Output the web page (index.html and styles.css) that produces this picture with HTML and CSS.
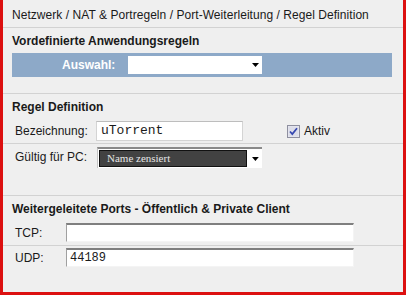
FILE: index.html
```html
<!DOCTYPE html>
<html lang="de">

<head>
    <meta charset="UTF-8">
    <title>Regel Definition</title>
    <link rel="stylesheet" href="styles.css">
</head>

<body>
    <div class="panel">
        <div class="crumb">Netzwerk / NAT &amp; Portregeln / Port-Weiterleitung / Regel Definition</div>

        <div class="section sec-preset">
            <div class="title">Vordefinierte Anwendungsregeln</div>
            <div class="bar">
                <span class="bar-label">Auswahl:</span>
                <div class="select-white">
                    <svg class="arrow" width="7" height="4" viewBox="0 0 7 4"><path d="M0 0h7L3.5 4z" fill="#000"/></svg>
                </div>
            </div>
        </div>

        <div class="section sec-rule">
            <div class="title">Regel Definition</div>
            <div class="row row-name">
                <label class="lbl lbl-wide">Bezeichnung:</label>
                <div class="input input-flat">uTorrent</div>
                <div class="check">
                    <svg width="13" height="13" viewBox="0 0 13 13">
                        <rect x="0.5" y="0.5" width="12" height="12" fill="#e8e8f0" stroke="#8e8f9f"/>
                        <rect x="1.5" y="1.5" width="10" height="10" fill="#dcdde9"/>
                        <path d="M3 6.5l2.3 2.6L10 3.2" fill="none" stroke="#3547b0" stroke-width="1.7"/>
                    </svg>
                    <span>Aktiv</span>
                </div>
            </div>
            <div class="row row-pc">
                <label class="lbl lbl-wide">Gültig für PC:</label>
                <div class="select-dark">
                    <div class="select-dark-inner">Name zensiert</div>
                    <svg class="arrow" width="7" height="4" viewBox="0 0 7 4"><path d="M0 0h7L3.5 4z" fill="#000"/></svg>
                </div>
            </div>
        </div>

        <div class="section sec-ports">
            <div class="title">Weitergeleitete Ports - Öffentlich &amp; Private Client</div>
            <div class="row row-port">
                <label class="lbl lbl-narrow">TCP:</label>
                <div class="input input-inset"></div>
            </div>
            <div class="row row-port last">
                <label class="lbl lbl-narrow">UDP:</label>
                <div class="input input-inset">44189</div>
            </div>
        </div>
    </div>
</body>

</html>
```

FILE: styles.css
```css
body {
    margin: 0;
    background-color: #ffffff;
    font-family: "Liberation Sans", Arial, sans-serif;
    font-size: 12px;
    color: #1a1a1a;
}

.panel {
    width: 400px;
    height: 292px;
    background-color: #efefef;
    border-left: 3px solid #dc1010;
    border-right: 3px solid #dc1010;
    border-bottom: 3px solid #dc1010;
}

.crumb {
    height: 27px;
    line-height: 30px;
    padding-left: 9px;
    letter-spacing: 0.05px;
    border-bottom: 1px solid #d2d2d2;
}

.section {
    border-bottom: 1px solid #d2d2d2;
}

.sec-ports {
    border-bottom: none;
}

.title {
    height: 24px;
    line-height: 26px;
    padding-left: 9px;
    font-weight: bold;
}

.bar {
    display: flex;
    align-items: center;
    height: 24px;
    margin: 1px 11px 16px 9px;
    background-color: #8da9c8;
}

.bar-label {
    width: 50px;
    margin-left: 50px;
    margin-right: 16px;
    color: #ffffff;
    font-weight: bold;
}

.select-white {
    display: flex;
    align-items: center;
    justify-content: flex-end;
    width: 134px;
    height: 18px;
    background-color: #ffffff;
}

.arrow {
    margin-right: 3px;
}

.row {
    display: flex;
    align-items: flex-start;
}

.row-name {
    height: 26px;
    padding-top: 3px;
    box-sizing: border-box;
    border-bottom: 1px solid #d2d2d2;
}

.row-pc {
    height: 51px;
    padding-top: 3px;
    box-sizing: border-box;
}

.lbl {
    padding-left: 12px;
    line-height: 20px;
}

.lbl-wide {
    width: 81px;
}

.lbl-narrow {
    width: 51px;
}

.input {
    box-sizing: border-box;
    background-color: #ffffff;
    font-family: "Liberation Mono", "Courier New", monospace;
    font-size: 13px;
}

.input-flat {
    width: 147px;
    height: 20px;
    line-height: 18px;
    padding-left: 4px;
    border: 1px solid #d4d4d4;
    border-top-color: #bdbdbd;
}

.check {
    display: flex;
    align-items: center;
    height: 20px;
    margin-left: 44px;
}

.check svg {
    margin-right: 4px;
}

.select-dark {
    display: flex;
    align-items: center;
    box-sizing: border-box;
    width: 165px;
    height: 21px;
    margin-left: 1px;
    background-color: #ffffff;
    border-top: 2px solid #8a8a8a;
    border-left: 1px solid #c4c4c4;
}

.select-dark-inner {
    box-sizing: border-box;
    width: 152px;
    height: 17px;
    margin-left: 1px;
    padding-left: 7px;
    background-color: #424242;
    border: 1px solid #111111;
    color: #e6e6e6;
    font-family: "Liberation Serif", "Times New Roman", serif;
    font-size: 11px;
    line-height: 15px;
}

.select-dark .arrow {
    margin-left: 5px;
}

.row-port {
    height: 26px;
    padding-top: 3px;
    box-sizing: border-box;
    border-bottom: 1px solid #d2d2d2;
}

.row-port.last {
    border-bottom: none;
    padding-top: 2px;
}

.input-inset {
    width: 288px;
    height: 19px;
    line-height: 17px;
    padding-left: 3px;
    border-top: 2px solid #7f7f7f;
    border-left: 1px solid #a0a0a0;
    border-right: 1px solid #f4f4f4;
    border-bottom: 1px solid #f4f4f4;
    font-size: 12px;
}
```
